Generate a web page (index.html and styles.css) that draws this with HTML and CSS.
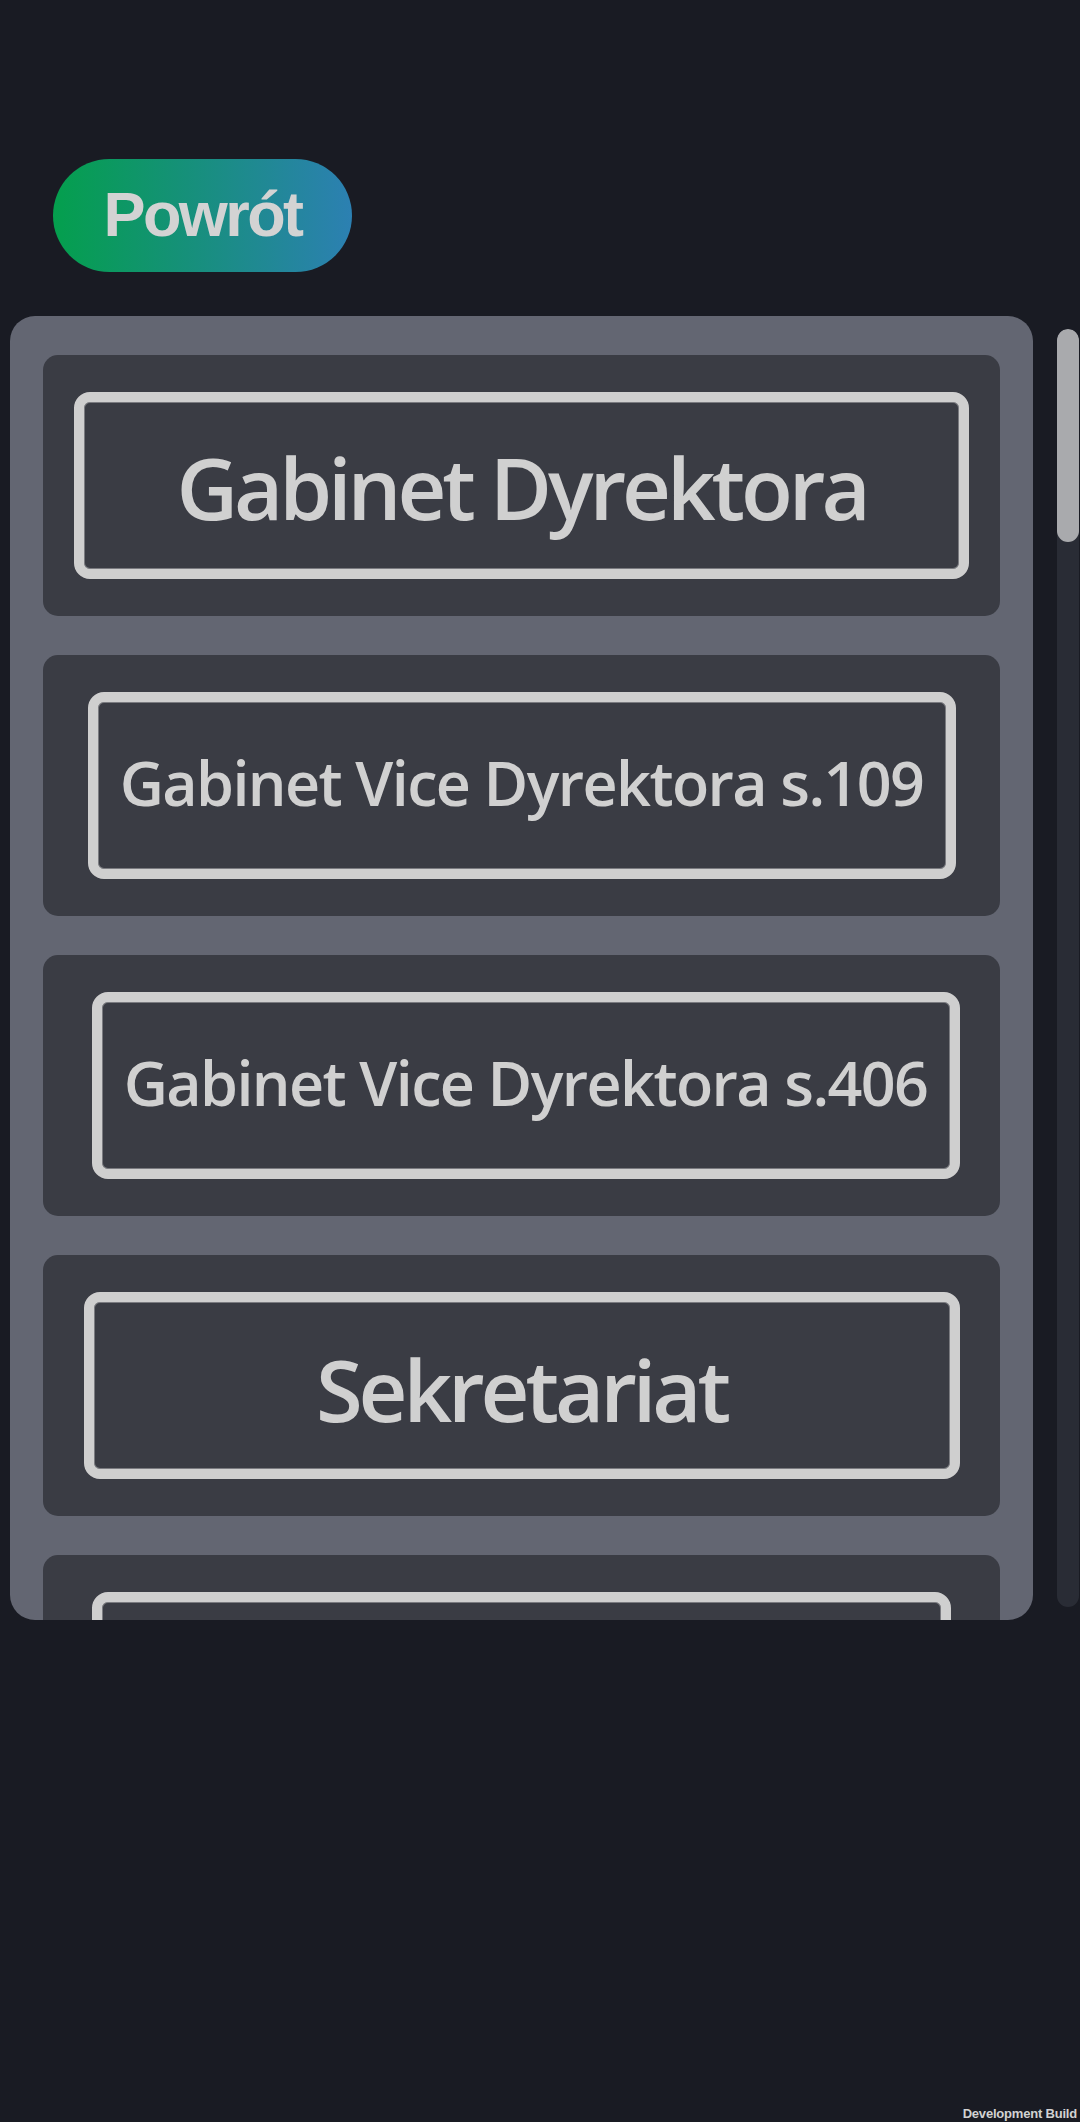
FILE: index.html
```html
<!DOCTYPE html>
<html lang="pl">
<head>
<meta charset="utf-8">
<title>Gabinety</title>
<link rel="stylesheet" href="styles.css">
</head>
<body>
<div class="screen">
  <div class="top">
    <button class="back">Powrót</button>
  </div>
  <div class="main">
    <div class="panel">
      <div class="card"><div class="room room-1 big">Gabinet Dyrektora</div></div>
      <div class="card"><div class="room room-2">Gabinet Vice Dyrektora s.109</div></div>
      <div class="card"><div class="room room-3">Gabinet Vice Dyrektora s.406</div></div>
      <div class="card"><div class="room room-4 big">Sekretariat</div></div>
      <div class="card"><div class="room room-5 big"></div></div>
    </div>
    <div class="scrollbar"><div class="thumb"></div></div>
  </div>
  <div class="dev">Development Build</div>
</div>
</body>
</html>
```

FILE: styles.css
```css
html, body {
  margin: 0;
  padding: 0;
  background: #191b23;
}

.screen {
  width: 1080px;
  height: 2122px;
  display: flex;
  flex-direction: column;
  overflow: hidden;
  box-sizing: border-box;
}

.top {
  padding: 159px 0 0 53px;
}

.back {
  width: 299px;
  height: 113px;
  border: none;
  border-radius: 57px;
  background: linear-gradient(90deg, #049f4d 0%, #16907a 45%, #2c80b2 100%);
  color: #d3d3d3;
  font-family: "Liberation Sans", Arial, sans-serif;
  font-weight: bold;
  font-size: 63px;
  letter-spacing: -2.6px;
  padding: 0 0 4px 0;
  display: flex;
  align-items: center;
  justify-content: center;
}

.main {
  display: flex;
  align-items: flex-start;
  margin-top: 44px;
  padding-left: 10px;
  gap: 24px;
}

.panel {
  width: 1023px;
  height: 1304px;
  box-sizing: border-box;
  background: #636672;
  border-radius: 25px;
  padding: 39px 33px;
  display: flex;
  flex-direction: column;
  gap: 39px;
  overflow: hidden;
}

.card {
  flex: 0 0 261px;
  background: #3a3c44;
  border-radius: 15px;
  display: flex;
  align-items: center;
  justify-content: center;
}

.room {
  height: 187px;
  box-sizing: border-box;
  border: 10px solid #cfcfcf;
  border-radius: 16px;
  box-shadow: inset 0 0 0 1px #7a7b80;
  display: flex;
  align-items: center;
  justify-content: center;
  color: #d0d0d0;
  font-family: "Open Sans", "Noto Sans", sans-serif;
  font-weight: 600;
  font-size: 61px;
  letter-spacing: -1.6px;
  white-space: nowrap;
  padding-bottom: 6px;
}

.room.big {
  font-size: 85px;
  letter-spacing: -4.1px;
  padding-bottom: 0;
  padding-top: 2px;
}

.room-1 { width: 895px; }
.room-2 { width: 868px; }
.room-3 { width: 868px; margin-left: 8px; }
.room-4 { width: 876px; }
.room-5 { width: 859px; }

.room-4.big { padding-top: 6px; }

.scrollbar {
  margin-top: 13px;
  width: 22px;
  height: 1278px;
  background: #292c35;
  border-radius: 11px;
  overflow: hidden;
}

.thumb {
  height: 213px;
  background: #a9aaad;
  border-radius: 11px;
}

.dev {
  margin-top: auto;
  align-self: flex-end;
  padding: 0 3px 1px 0;
  color: #d2d2d2;
  font-family: "Liberation Sans", Arial, sans-serif;
  font-weight: bold;
  font-size: 13px;
  letter-spacing: -0.2px;
  line-height: 15px;
}
```
